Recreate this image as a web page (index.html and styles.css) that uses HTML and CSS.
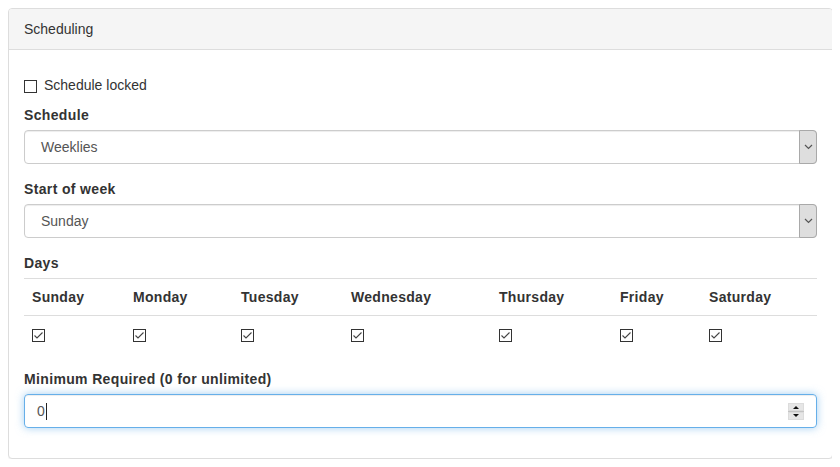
FILE: index.html
```html
<!DOCTYPE html>
<html>
<head>
<meta charset="utf-8">
<title>Scheduling</title>
<link rel="stylesheet" href="styles.css">
</head>
<body>
<div class="panel">
  <div class="panel-heading">Scheduling</div>
  <div class="panel-body">
    <div class="checkbox">
      <label class="check-label">
        <svg class="cbx" width="13" height="13" viewBox="0 0 13 13"><rect x="0.5" y="0.5" width="12" height="12" fill="#fff" stroke="#333"/></svg>
        <span>Schedule locked</span>
      </label>
    </div>

    <div class="form-group">
      <div class="label">Schedule</div>
      <div class="select-box">
        <span class="select-value">Weeklies</span>
        <span class="select-btn"><svg width="9" height="6" viewBox="0 0 9 6"><polyline points="1,1 4.5,4.5 8,1" fill="none" stroke="#555" stroke-width="1.2"/></svg></span>
      </div>
    </div>

    <div class="form-group">
      <div class="label">Start of week</div>
      <div class="select-box">
        <span class="select-value">Sunday</span>
        <span class="select-btn"><svg width="9" height="6" viewBox="0 0 9 6"><polyline points="1,1 4.5,4.5 8,1" fill="none" stroke="#555" stroke-width="1.2"/></svg></span>
      </div>
    </div>

    <div class="label">Days</div>
    <table class="days">
      <colgroup>
        <col class="c1"><col class="c2"><col class="c3"><col class="c4"><col class="c5"><col class="c6"><col class="c7">
      </colgroup>
      <tr>
        <th>Sunday</th><th>Monday</th><th>Tuesday</th><th>Wednesday</th><th>Thursday</th><th>Friday</th><th>Saturday</th>
      </tr>
      <tr>
        <td><svg class="cb" width="13" height="13" viewBox="0 0 13 13"><rect x="0.5" y="0.5" width="12" height="12" fill="#fff" stroke="#333"/><polyline points="2.5,6.5 5,9 10.5,3.5" fill="none" stroke="#444" stroke-width="1.1"/></svg></td>
        <td><svg class="cb" width="13" height="13" viewBox="0 0 13 13"><rect x="0.5" y="0.5" width="12" height="12" fill="#fff" stroke="#333"/><polyline points="2.5,6.5 5,9 10.5,3.5" fill="none" stroke="#444" stroke-width="1.1"/></svg></td>
        <td><svg class="cb" width="13" height="13" viewBox="0 0 13 13"><rect x="0.5" y="0.5" width="12" height="12" fill="#fff" stroke="#333"/><polyline points="2.5,6.5 5,9 10.5,3.5" fill="none" stroke="#444" stroke-width="1.1"/></svg></td>
        <td><svg class="cb" width="13" height="13" viewBox="0 0 13 13"><rect x="0.5" y="0.5" width="12" height="12" fill="#fff" stroke="#333"/><polyline points="2.5,6.5 5,9 10.5,3.5" fill="none" stroke="#444" stroke-width="1.1"/></svg></td>
        <td><svg class="cb" width="13" height="13" viewBox="0 0 13 13"><rect x="0.5" y="0.5" width="12" height="12" fill="#fff" stroke="#333"/><polyline points="2.5,6.5 5,9 10.5,3.5" fill="none" stroke="#444" stroke-width="1.1"/></svg></td>
        <td><svg class="cb" width="13" height="13" viewBox="0 0 13 13"><rect x="0.5" y="0.5" width="12" height="12" fill="#fff" stroke="#333"/><polyline points="2.5,6.5 5,9 10.5,3.5" fill="none" stroke="#444" stroke-width="1.1"/></svg></td>
        <td><svg class="cb" width="13" height="13" viewBox="0 0 13 13"><rect x="0.5" y="0.5" width="12" height="12" fill="#fff" stroke="#333"/><polyline points="2.5,6.5 5,9 10.5,3.5" fill="none" stroke="#444" stroke-width="1.1"/></svg></td>
      </tr>
    </table>

    <div class="form-group">
      <div class="label">Minimum Required (0 for unlimited)</div>
      <div class="num-box">
        <span class="num-value">0</span><span class="caret"></span>
        <span class="spacer"></span>
        <svg class="spin" width="16" height="17" viewBox="0 0 16 17">
          <rect x="0" y="0" width="16" height="17" fill="#dcdcdc"/>
          <rect x="0" y="8" width="16" height="1" fill="#c4c4c4"/>
          <rect x="1" y="1" width="14" height="6" fill="#e6e6e6"/>
          <rect x="1" y="10" width="14" height="6" fill="#e6e6e6"/>
          <polygon points="5,6 11,6 8,3" fill="#111"/>
          <polygon points="5,11 11,11 8,14" fill="#111"/>
        </svg>
      </div>
    </div>
  </div>
</div>
</body>
</html>
```

FILE: styles.css
```css
* { box-sizing: border-box; }
body {
  margin: 8px;
  font-family: "Liberation Sans", Arial, sans-serif;
  font-size: 14px;
  line-height: 20px;
  color: #333;
  background: #fff;
}
.panel {
  width: 825px;
  border: 1px solid #ddd;
  border-radius: 4px;
  background: #fff;
  box-shadow: 0 1px 1px rgba(0,0,0,.05);
}
.panel-heading {
  padding: 10px 15px;
  background: #f5f5f5;
  border-bottom: 1px solid #ddd;
  border-radius: 3px 3px 0 0;
  color: #333;
}
.panel-body {
  padding: 15px;
}
.checkbox {
  margin: 10px 0;
}
.check-label {
  display: flex;
  align-items: flex-start;
  gap: 7px;
}
.cbx {
  display: block;
  margin-top: 5px;
  flex: none;
}
.form-group {
  margin-bottom: 15px;
}
.label {
  font-weight: bold;
  letter-spacing: 0.35px;
  margin-bottom: 5px;
}
.select-box {
  display: flex;
  height: 34px;
  border: 1px solid #ccc;
  border-radius: 4px;
  box-shadow: inset 0 1px 1px rgba(0,0,0,.075);
  color: #555;
}
.select-value {
  flex: 1;
  padding: 6px 16px;
}
.select-btn {
  width: 18px;
  margin: -1px -1px -1px 0;
  background: #dedede;
  border: 1px solid #a9a9a9;
  border-radius: 0 4px 4px 0;
  display: flex;
  align-items: center;
  justify-content: center;
}
.days {
  width: 100%;
  border-collapse: collapse;
  table-layout: fixed;
  margin-bottom: 17px;
}
.c1 { width: 101px; }
.c2 { width: 108px; }
.c3 { width: 110px; }
.c4 { width: 148px; }
.c5 { width: 121px; }
.c6 { width: 89px; }
.c7 { width: 116px; }
.days th, .days td {
  padding: 8px;
  border-top: 1px solid #ddd;
  text-align: left;
  line-height: 20px;
}
.days th {
  font-weight: bold;
  letter-spacing: 0.3px;
}
.cb {
  display: block;
  margin: 5px 0 2px;
}
.num-box {
  display: flex;
  align-items: center;
  height: 34px;
  padding: 0 12px;
  border: 1px solid #66afe9;
  border-radius: 4px;
  box-shadow: inset 0 1px 1px rgba(0,0,0,.075), 0 0 8px rgba(102,175,233,.6);
  color: #555;
}
.caret {
  width: 1px;
  height: 17px;
  background: #222;
  margin-left: 1px;
}
.spacer { flex: 1; }
.spin { display: block; }
```
